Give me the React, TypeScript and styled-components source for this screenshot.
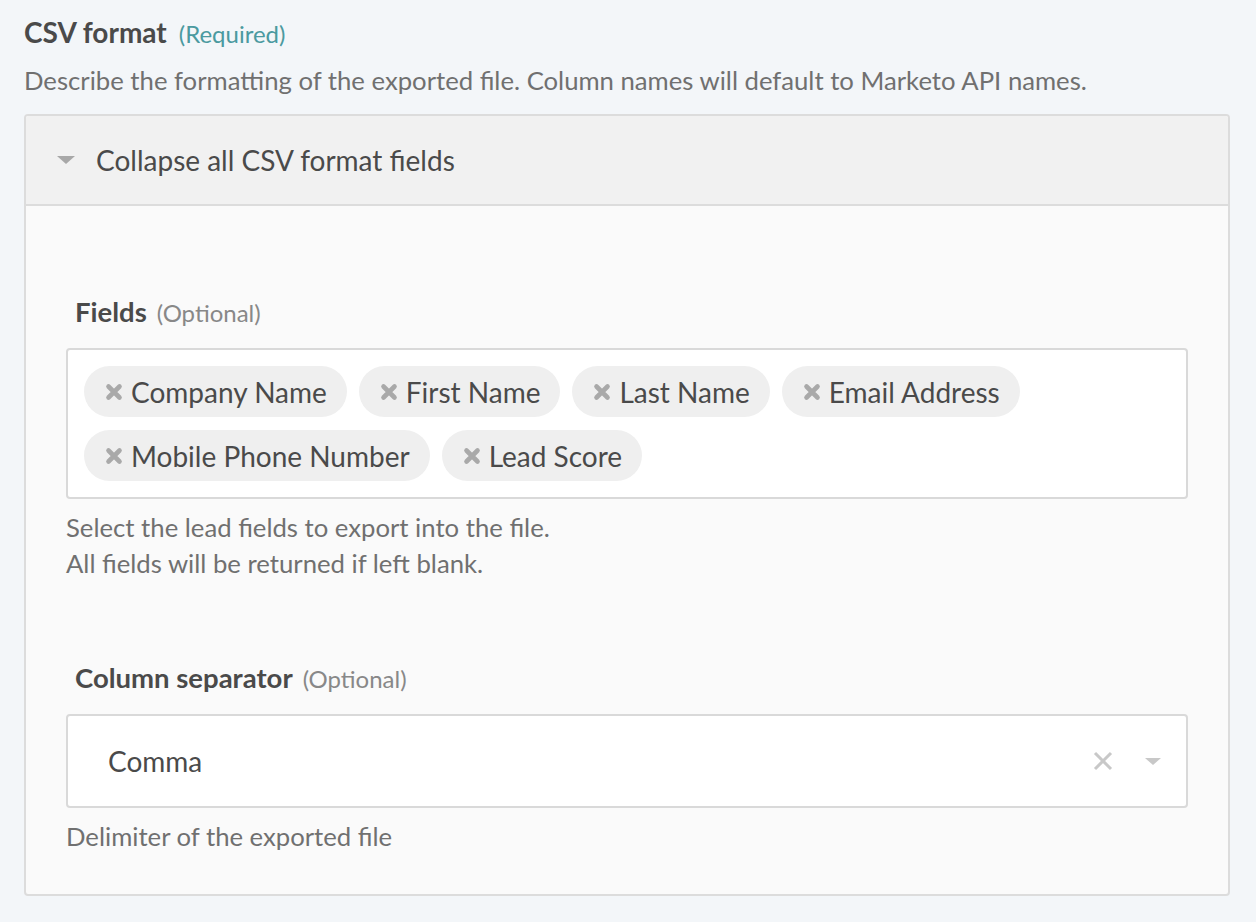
import React from "react";
import styled, { createGlobalStyle } from "styled-components";

const Global = createGlobalStyle`
  html, body { margin: 0; padding: 0; background: #f3f6f9; }
  body { font-family: Lato, "Open Sans", sans-serif; color: #4a4a4a; }
  * { box-sizing: border-box; }
`;

const Page = styled.div`
  width: 1256px;
  height: 922px;
  padding: 15px 26px 0 24px;
  background: #f3f6f9;
`;

const TitleRow = styled.div`
  display: flex;
  align-items: baseline;
  gap: 12px;
  height: 36px;
`;

const Title = styled.span`
  font-size: 28px;
  font-weight: 700;
  color: #4a4a4a;
`;

const Required = styled.span`
  font-size: 24px;
  color: #4b9aa0;
`;

const Description = styled.p`
  margin: 13px 0 0;
  font-size: 25.7px;
  line-height: 32px;
  color: #707070;
`;

const Panel = styled.div`
  margin-top: 18px;
  width: 1206px;
  border: 2px solid #dcdcdc;
  border-radius: 4px;
  background: #fafafa;
  overflow: hidden;
`;

const PanelHeader = styled.div`
  display: flex;
  align-items: center;
  height: 90px;
  padding-left: 31px;
  background: #f1f1f1;
  border-bottom: 2px solid #dcdcdc;
  font-size: 28px;
  color: #4a4a4a;
`;

const Caret = styled.span<{ $color?: string; $size?: number }>`
  display: inline-block;
  width: 0;
  height: 0;
  border-left: ${(p) => p.$size ?? 9}px solid transparent;
  border-right: ${(p) => p.$size ?? 9}px solid transparent;
  border-top: ${(p) => Math.round((p.$size ?? 9) * 0.9)}px solid ${(p) => p.$color ?? "#a8a8a8"};
`;

const HeaderText = styled.span`
  margin-left: 21px;
`;

const PanelBody = styled.div`
  padding: 89px 40px 40px 40px;
`;

const Field = styled.div<{ $gap?: number }>`
  margin-top: ${(p) => p.$gap ?? 0}px;
`;

const LabelRow = styled.div`
  display: flex;
  align-items: baseline;
  gap: 10px;
  padding-left: 9px;
  height: 38px;
`;

const LabelText = styled.span`
  font-size: 27.5px;
  font-weight: 700;
  color: #4a4a4a;
`;

const Optional = styled.span`
  font-size: 24px;
  color: #888888;
`;

const TagBox = styled.div`
  margin-top: 15px;
  display: flex;
  flex-wrap: wrap;
  gap: 13px 12px;
  padding: 16px;
  background: #ffffff;
  border: 2px solid #d9d9d9;
  border-radius: 4px;
`;

const Tag = styled.span`
  display: inline-flex;
  align-items: center;
  height: 51px;
  padding: 0 20px 0 21px;
  border-radius: 26px;
  background: #efefef;
  font-size: 28px;
  color: #4a4a4a;
`;

const TagX = styled.svg`
  width: 18px;
  height: 18px;
  margin-right: 8px;
  flex: none;
`;

const Help = styled.p`
  margin: 10px 0 0;
  font-size: 25.7px;
  line-height: 36px;
  color: #707070;
`;

const Select = styled.div`
  margin-top: 15px;
  display: flex;
  align-items: center;
  height: 94px;
  padding: 0 25px 0 40px;
  background: #ffffff;
  border: 2px solid #d9d9d9;
  border-radius: 4px;
  font-size: 28px;
  color: #4a4a4a;
`;

const SelectValue = styled.span`
  flex: 1;
`;

const ClearIcon = styled.svg`
  width: 20px;
  height: 20px;
  margin-right: 32px;
`;

const TagIcon = () => (
  <TagX viewBox="0 0 18 18">
    <path d="M3.5 3.5 L14.5 14.5 M14.5 3.5 L3.5 14.5" stroke="#a9a9a9" strokeWidth="4.6" strokeLinecap="round" />
  </TagX>
);

const tags = [
  "Company Name",
  "First Name",
  "Last Name",
  "Email Address",
  "Mobile Phone Number",
  "Lead Score",
];

export default function App() {
  return (
    <Page>
      <Global />
      <TitleRow>
        <Title>CSV format</Title>
        <Required>(Required)</Required>
      </TitleRow>
      <Description>
        Describe the formatting of the exported file. Column names will default to Marketo API names.
      </Description>
      <Panel>
        <PanelHeader>
          <Caret />
          <HeaderText>Collapse all CSV format fields</HeaderText>
        </PanelHeader>
        <PanelBody>
          <Field>
            <LabelRow>
              <LabelText>Fields</LabelText>
              <Optional>(Optional)</Optional>
            </LabelRow>
            <TagBox>
              {tags.map((t) => (
                <Tag key={t}>
                  <TagIcon />
                  {t}
                </Tag>
              ))}
            </TagBox>
            <Help>
              Select the lead fields to export into the file.
              <br />
              All fields will be returned if left blank.
            </Help>
          </Field>
          <Field $gap={80}>
            <LabelRow>
              <LabelText>Column separator</LabelText>
              <Optional>(Optional)</Optional>
            </LabelRow>
            <Select>
              <SelectValue>Comma</SelectValue>
              <ClearIcon viewBox="0 0 20 20">
                <path d="M2 2 L18 18 M18 2 L2 18" stroke="#c8c8c8" strokeWidth="3" />
              </ClearIcon>
              <Caret $color="#c8c8c8" $size={8} />
            </Select>
            <Help>Delimiter of the exported file</Help>
          </Field>
        </PanelBody>
      </Panel>
    </Page>
  );
}
